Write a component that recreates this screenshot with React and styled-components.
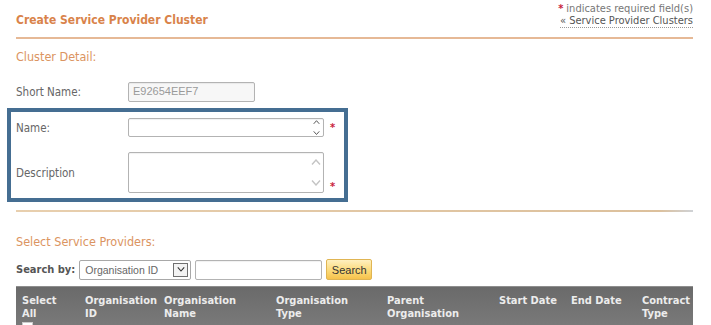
import React from "react";
import styled, { createGlobalStyle } from "styled-components";

const GlobalStyle = createGlobalStyle`
  body {
    margin: 0;
    background: #ffffff;
    font-family: "DejaVu Sans Condensed", "DejaVu Sans", Verdana, sans-serif;
    font-stretch: condensed;
    color: #666;
  }
`;

const Page = styled.div`
  width: 677px;
  padding: 0 18px 0 16px;
  height: 325px;
  overflow: hidden;
`;

const Header = styled.div`
  display: flex;
  justify-content: space-between;
  align-items: flex-end;
  padding: 3px 0 9px;
  border-bottom: 2px solid #e6b996;
`;

const Title = styled.h1`
  margin: 0 0 1px;
  font-size: 12px;
  font-weight: bold;
  color: #d9834a;
`;

const HeaderNote = styled.div`
  display: flex;
  flex-direction: column;
  align-items: flex-end;
  font-size: 11px;
  line-height: 12px;
  color: #777;
`;

const Star = styled.span`
  color: #c81d3c;
  font-weight: bold;
  margin: ${(p) => (p.$field ? "0 0 0 6px" : "0 3px 0 0")};
  align-self: ${(p) => p.$align || "auto"};
  font-size: 11px;
`;

const BackLink = styled.a`
  color: #555;
  text-decoration: none;
  border-bottom: 1px dotted #999;
`;

const SectionTitle = styled.h2`
  margin: ${(p) => p.$margin};
  font-size: 12.5px;
  font-weight: normal;
  color: #db9461;
`;

const Row = styled.div`
  display: flex;
  align-items: ${(p) => p.$align || "center"};
`;

const Label = styled.label`
  width: ${(p) => p.$width}px;
  flex-shrink: 0;
  font-size: 11.5px;
  color: #666;
  align-self: center;
`;

const TextInput = styled.div`
  box-sizing: border-box;
  width: ${(p) => p.$width}px;
  height: ${(p) => p.$height}px;
  border: 1px solid #b3b3b3;
  border-radius: 2px;
  background: ${(p) => (p.$disabled ? "#f7f7f7" : "#fff")};
  box-shadow: inset 0 1px 1px rgba(0, 0, 0, 0.06);
  color: #9a9a9a;
  font-family: "Liberation Sans", Arial, sans-serif;
  font-size: 11px;
  padding: 2px 4px;
  position: relative;
`;

const Scroller = styled.div`
  position: absolute;
  right: 2px;
  top: ${(p) => p.$inset}px;
  bottom: ${(p) => p.$inset}px;
  width: 10px;
  display: flex;
  flex-direction: column;
  justify-content: space-between;
  align-items: center;
  color: ${(p) => p.$color};
`;

const FieldGroup = styled.div`
  margin: 6px 0 0 -9px;
  width: 323px;
  border: 4px solid #456e92;
  padding: 6px 5px 5px 5px;
  display: flex;
  flex-direction: column;
  gap: 15px;
`;

const Divider = styled.div`
  margin-top: 8px;
  height: 2px;
  background: linear-gradient(to right, #e8cfae, #dcc09c 95%, #cfd2d6);
`;

const SearchRow = styled.div`
  display: flex;
  align-items: center;
  gap: 4px;
  margin-top: 10px;
`;

const SearchLabel = styled.span`
  font-size: 11px;
  font-weight: bold;
  color: #555;
`;

const Select = styled.div`
  box-sizing: border-box;
  width: 112px;
  height: 20px;
  border: 1px solid #a8a8a8;
  border-radius: 2px;
  display: flex;
  align-items: center;
  justify-content: space-between;
  padding: 0 2px 0 5px;
  font-family: "Liberation Sans", Arial, sans-serif;
  font-size: 10.5px;
  color: #666;
`;

const SelectArrow = styled.span`
  box-sizing: border-box;
  width: 15px;
  height: 14px;
  border: 1px solid #707070;
  background: #f3f3f3;
  display: flex;
  align-items: center;
  justify-content: center;
  color: #333;
`;

const SearchButton = styled.button`
  height: 21px;
  width: 46px;
  padding: 0;
  border: 1px solid #e0b553;
  border-radius: 2px;
  background: linear-gradient(#fef0c0, #fbd874 60%, #f6c24c);
  color: #333;
  font-family: "Liberation Sans", Arial, sans-serif;
  font-size: 11px;
`;

const Table = styled.div`
  margin-top: 6px;
  height: 60px;
  border-top: 1px solid #8e8e8e;
  background: linear-gradient(#6a6a6a, #7a7a7a 40px, #7e7e7e);
`;

const HeaderRow = styled.div`
  display: grid;
  grid-template-columns: 63px 79px 112px 111px 112px 72px 71px 51px;
  padding-top: 7px;
`;

const HeadCell = styled.div`
  padding-left: 6px;
  font-size: 11px;
  line-height: 13px;
  font-weight: bold;
  color: #ececec;
  white-space: pre-line;
`;

const CheckBox = styled.span`
  display: block;
  margin-top: 2px;
  width: 9px;
  height: 9px;
  background: #fff;
  border: 1px solid #ccc;
`;

const Chevron = ({ up, size = 7 }) => (
  <svg width={size} height={size * 0.6} viewBox="0 0 10 6">
    <path
      d={up ? "M1 5.5 L5 1 L9 5.5" : "M1 0.5 L5 5 L9 0.5"}
      fill="none"
      stroke="currentColor"
      strokeWidth="1.4"
    />
  </svg>
);

const columns = [
  "Select\nAll",
  "Organisation\nID",
  "Organisation\nName",
  "Organisation\nType",
  "Parent\nOrganisation",
  "Start Date",
  "End Date",
  "Contract\nType",
];

export default function App() {
  return (
    <>
      <GlobalStyle />
      <Page>
        <Header>
          <Title>Create Service Provider Cluster</Title>
          <HeaderNote>
            <span>
              <Star>*</Star>indicates required field(s)
            </span>
            <BackLink href="#">« Service Provider Clusters</BackLink>
          </HeaderNote>
        </Header>

        <SectionTitle $margin="10px 0 18px">Cluster Detail:</SectionTitle>

        <Row>
          <Label $width={112}>Short Name:</Label>
          <TextInput $width={127} $height={20} $disabled>
            E92654EEF7
          </TextInput>
        </Row>

        <FieldGroup>
          <Row>
            <Label $width={112}>Name:</Label>
            <TextInput $width={196} $height={19}>
              <Scroller $color="#555" $inset={1}>
                <Chevron up />
                <Chevron />
              </Scroller>
            </TextInput>
            <Star $field>*</Star>
          </Row>
          <Row $align="flex-end">
            <Label $width={112}>Description</Label>
            <TextInput $width={196} $height={41}>
              <Scroller $color="#c4c4c4" $inset={6}>
                <Chevron up size={10} />
                <Chevron size={10} />
              </Scroller>
            </TextInput>
            <Star $field $align="flex-end">
              *
            </Star>
          </Row>
        </FieldGroup>

        <Divider />

        <SectionTitle $margin="22px 0 0">Select Service Providers:</SectionTitle>

        <SearchRow>
          <SearchLabel>Search by:</SearchLabel>
          <Select>
            Organisation ID
            <SelectArrow>
              <Chevron size={8} />
            </SelectArrow>
          </Select>
          <TextInput $width={127} $height={20} />
          <SearchButton>Search</SearchButton>
        </SearchRow>

        <Table>
          <HeaderRow>
            {columns.map((c, i) => (
              <HeadCell key={c}>
                {c}
                {i === 0 && <CheckBox />}
              </HeadCell>
            ))}
          </HeaderRow>
        </Table>
      </Page>
    </>
  );
}
